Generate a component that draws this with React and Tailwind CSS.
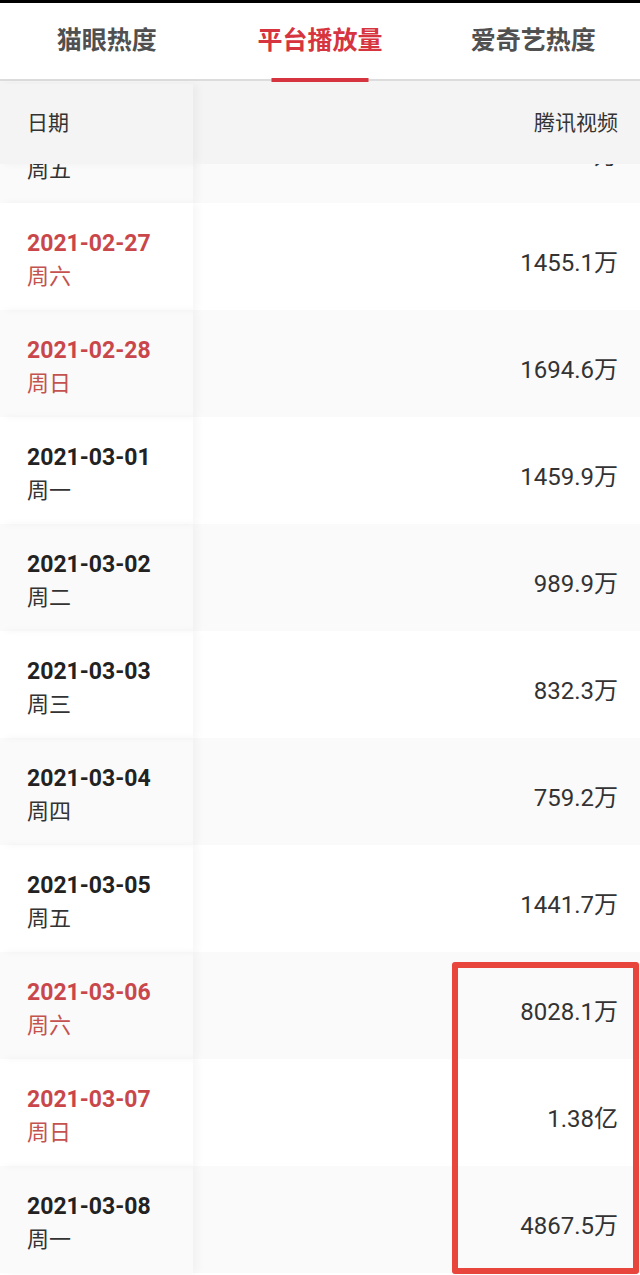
import React from "react";

const FONT = { fontFamily: 'Roboto, "Noto Sans CJK SC", "Noto Sans", sans-serif' };

const TABS = ["猫眼热度", "平台播放量", "爱奇艺热度"];

const ROWS = [
  { date: "2021-02-27", day: "周六", value: "1455.1万", weekend: true },
  { date: "2021-02-28", day: "周日", value: "1694.6万", weekend: true },
  { date: "2021-03-01", day: "周一", value: "1459.9万" },
  { date: "2021-03-02", day: "周二", value: "989.9万" },
  { date: "2021-03-03", day: "周三", value: "832.3万" },
  { date: "2021-03-04", day: "周四", value: "759.2万" },
  { date: "2021-03-05", day: "周五", value: "1441.7万" },
  { date: "2021-03-06", day: "周六", value: "8028.1万", weekend: true },
  { date: "2021-03-07", day: "周日", value: "1.38亿", weekend: true },
  { date: "2021-03-08", day: "周一", value: "4867.5万" },
];

const Row = ({ row, gray }) => (
  <div className={`flex h-[107px] ${gray ? "bg-[#fafafa]" : "bg-white"}`}>
    <div className="relative z-10 w-[193px] pl-[27px] pt-[26px] shadow-[5px_0_8px_rgba(0,0,0,0.035)]">
      <div
        className={`text-[23px] leading-[30px] font-bold ${
          row.weekend ? "text-[#c9474b]" : "text-[#222]"
        }`}
      >
        {row.date}
      </div>
      <div
        className={`mt-[2px] text-[22px] leading-[32px] ${
          row.weekend ? "text-[#c4524f]" : "text-[#333]"
        }`}
      >
        {row.day}
      </div>
    </div>
    <div className="flex-1 pt-[44px] pr-[22px] text-right text-[24px] leading-[32px] text-[#333]">
      {row.value}
    </div>
  </div>
);

export default function App() {
  return (
    <div style={FONT} className="relative w-[640px] h-[1275px] overflow-hidden bg-white">
      <div className="h-[3px] bg-black" />

      {/* tabs */}
      <div className="flex h-[78px] border-b-2 border-[#dcdcdc]">
        {TABS.map((t, i) => (
          <div key={t} className="relative flex flex-1 items-center justify-center">
            <span
              className={`text-[25px] font-bold ${
                i === 1 ? "text-[#d6353f]" : "text-[#505050]"
              }`}
            >
              {t}
            </span>
            {i === 1 && (
              <div className="absolute bottom-[-3px] left-1/2 h-[4px] w-[97px] -translate-x-1/2 bg-[#d6353f]" />
            )}
          </div>
        ))}
      </div>

      {/* table header */}
      <div className="flex h-[83px] bg-[#f4f4f4] pt-[3px] text-[21px] text-[#333]">
        <div className="relative z-10 flex w-[193px] items-center pl-[27px] shadow-[5px_0_8px_rgba(0,0,0,0.04)]">
          日期
        </div>
        <div className="flex flex-1 items-center justify-end pr-[22px]">腾讯视频</div>
      </div>

      {/* partially scrolled row */}
      <div className="h-[39px] overflow-hidden">
        <div className="-mt-[68px]">
          <Row row={{ date: "2021-02-26", day: "周五", value: "1296.5万" }} gray />
        </div>
      </div>

      {ROWS.map((r, i) => (
        <Row key={r.date} row={r} gray={i % 2 === 1} />
      ))}

      {/* annotation box */}
      <div className="absolute left-[452px] top-[962px] h-[312px] w-[187px] rounded-[3px] border-[6px] border-[#e8453c]" />
    </div>
  );
}
